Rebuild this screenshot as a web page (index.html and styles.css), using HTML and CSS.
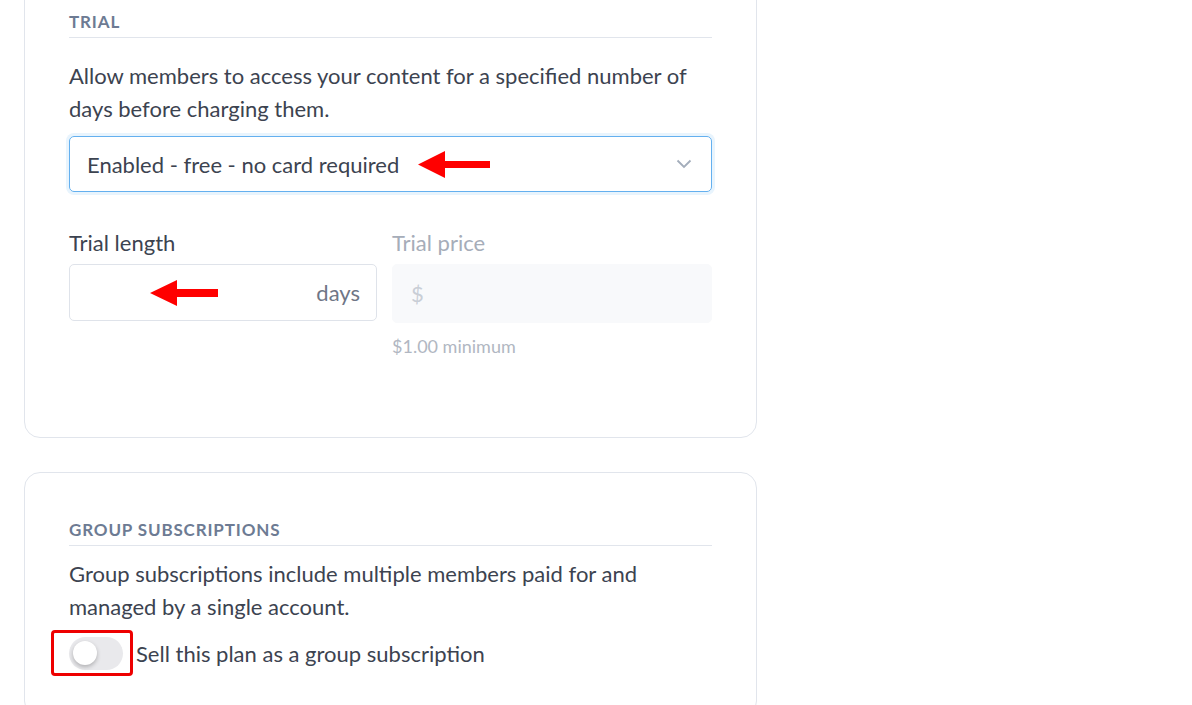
FILE: index.html
```html
<!DOCTYPE html>
<html lang="en">
<head>
<meta charset="utf-8">
<title>Plan settings</title>
<link rel="stylesheet" href="styles.css">
</head>
<body>
<div class="page">
  <section class="card card-trial">
    <h3 class="section-title">Trial</h3>
    <p class="desc">Allow members to access your content for a specified number of days before charging them.</p>
    <div class="select">
      <span class="select-value">Enabled - free - no card required</span>
      <svg class="arrow arrow-select" width="72" height="27" viewBox="0 0 72 27"><polygon points="0,13.5 27,0 27,10 72,10 72,17 27,17 27,27" fill="#ff0000"/></svg>
      <svg class="chevron" width="16" height="10" viewBox="0 0 16 10"><polyline points="1.5,1.5 8,8 14.5,1.5" fill="none" stroke="#a3adbb" stroke-width="1.8"/></svg>
    </div>
    <div class="fields">
      <div class="field">
        <label class="field-label">Trial length</label>
        <div class="input">
          <svg class="arrow arrow-days" width="68" height="26" viewBox="0 0 68 26"><polygon points="0,13 27,0 27,9 68,9 68,17 27,17 27,26" fill="#ff0000"/></svg>
          <span class="suffix">days</span>
        </div>
      </div>
      <div class="field field-disabled">
        <label class="field-label">Trial price</label>
        <div class="input input-disabled"><span class="prefix">$</span></div>
        <p class="hint">$1.00 minimum</p>
      </div>
    </div>
  </section>

  <section class="card card-group">
    <h3 class="section-title">Group subscriptions</h3>
    <p class="desc">Group subscriptions include multiple members paid for and managed by a single account.</p>
    <div class="toggle-row">
      <span class="toggle-frame"><span class="toggle"><span class="knob"></span></span></span>
      <span class="toggle-label">Sell this plan as a group subscription</span>
    </div>
  </section>
</div>
</body>
</html>
```

FILE: styles.css
```css
* { box-sizing: border-box; }
html, body { margin: 0; padding: 0; background: #ffffff; }
body {
  font-family: "Lato", "Open Sans", sans-serif;
  color: #3c4350;
  overflow: hidden;
  height: 705px;
}
.page {
  width: 733px;
  margin-left: 24px;
  display: flex;
  flex-direction: column;
  gap: 34px;
}
.card {
  border: 1px solid #e1e5ec;
  border-radius: 16px;
  padding: 0 44px;
  background: #fff;
}
.card-trial {
  margin-top: -30px;
  padding-top: 42px;
  padding-bottom: 81px;
}
.card-group {
  padding-top: 48px;
  padding-bottom: 40px;
}
.section-title {
  margin: 0;
  font-size: 17px;
  line-height: 18px;
  font-weight: 700;
  text-transform: uppercase;
  letter-spacing: 0.85px;
  color: #6d7b93;
  padding-bottom: 6px;
  border-bottom: 1px solid #e1e5ec;
}
.desc {
  margin: 21px 0 0;
  font-size: 22px;
  line-height: 33px;
  color: #3c4350;
}
.card-group .desc { margin-top: 11px; }
.select {
  margin-top: 11px;
  height: 56px;
  border: 1px solid #64b0ef;
  border-radius: 5px;
  box-shadow: 0 0 0 3px #e8f4fd;
  display: flex;
  align-items: center;
  padding: 0 19px 0 17px;
}
.select-value { font-size: 22px; color: #3c4350; }
.arrow-select { margin-left: 19px; }
.chevron { margin-left: auto; }
.fields {
  margin-top: 39px;
  display: grid;
  grid-template-columns: 308px 1fr;
  column-gap: 15px;
}
.field-label {
  display: block;
  font-size: 22px;
  line-height: 24px;
  color: #3c4350;
  margin-bottom: 9px;
}
.input {
  height: 57px;
  border: 1px solid #dfe3ea;
  border-radius: 5px;
  display: flex;
  align-items: center;
  padding: 0 16px 0 17px;
}
.arrow-days { margin-left: 63px; }
.suffix { margin-left: auto; font-size: 22px; color: #6f7686; }
.field-disabled .field-label { color: #a6adb9; }
.input-disabled {
  background: #f8f9fb;
  border-color: #f8f9fb;
  height: 59px;
  padding-left: 18px;
}
.prefix { font-size: 22px; color: #c9ced6; }
.hint {
  margin: 13px 0 0;
  font-size: 18px;
  line-height: 20px;
  color: #b1b7c2;
}
.toggle-row {
  margin-top: 7px;
  display: flex;
  align-items: center;
}
.toggle-frame {
  margin-left: -18px;
  width: 82px;
  height: 46px;
  border: 3px solid #ee0000;
  border-radius: 4px;
  display: flex;
  align-items: center;
  justify-content: flex-end;
  padding-right: 7px;
}
.toggle {
  width: 54px;
  height: 33px;
  border-radius: 17px;
  background: #e9e9ec;
  display: flex;
  align-items: center;
  padding-left: 4px;
}
.knob {
  width: 24px;
  height: 24px;
  border-radius: 50%;
  background: #fff;
  box-shadow: 0 2px 4px rgba(0,0,0,0.25);
}
.toggle-label {
  margin-left: 3px;
  font-size: 22px;
  color: #3c4350;
}
```
